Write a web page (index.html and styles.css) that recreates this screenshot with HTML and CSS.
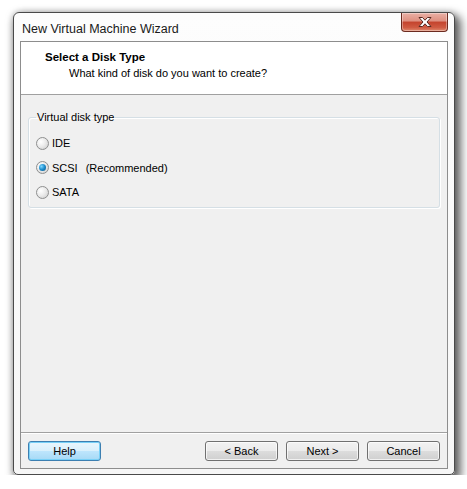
FILE: index.html
```html
<!DOCTYPE html>
<html>
<head>
<meta charset="utf-8">
<link rel="stylesheet" href="styles.css">
</head>
<body>
<div class="window">
  <div class="titlebar">
    <span class="title">New Virtual Machine Wizard</span>
    <div class="close">
      <svg width="18" height="12" viewBox="0 0 18 12">
        <path d="M3 1.5 L6.5 1.5 L9 4.2 L11.5 1.5 L15 1.5 L11 6 L15 10.5 L11.5 10.5 L9 7.8 L6.5 10.5 L3 10.5 L7 6 Z" fill="#fff" stroke="#5a2a22" stroke-width="1" stroke-linejoin="round"/>
      </svg>
    </div>
  </div>
  <div class="client">
    <div class="header">
      <div class="h-title">Select a Disk Type</div>
      <div class="h-sub">What kind of disk do you want to create?</div>
    </div>
    <div class="body">
      <fieldset class="group">
        <legend>Virtual disk type</legend>
        <div class="radio-row"><span class="radio"></span><span>IDE</span></div>
        <div class="radio-row"><span class="radio checked"></span><span>SCSI</span><span class="rec">(Recommended)</span></div>
        <div class="radio-row"><span class="radio"></span><span>SATA</span></div>
      </fieldset>
    </div>
    <div class="footer">
      <button class="btn default">Help</button>
      <div class="spacer"></div>
      <button class="btn">&lt; Back</button>
      <button class="btn">Next &gt;</button>
      <button class="btn">Cancel</button>
    </div>
  </div>
</div>
</body>
</html>
```

FILE: styles.css
```css
html, body {
  margin: 0;
  padding: 0;
  background: #ffffff;
}
body {
  padding: 12px 0 0 13px;
  font-family: "Liberation Sans", Arial, sans-serif;
  font-size: 11px;
  color: #000;
}
.window {
  width: 442px;
  height: 463px;
  box-sizing: border-box;
  border: 1px solid #4a4a4a;
  border-radius: 6px 6px 5px 5px;
  background: linear-gradient(#fdfdfd, #f6f6f6);
  box-shadow: 4px 5px 10px 2px rgba(0,0,0,0.6), 0 0 6px rgba(0,0,0,0.2);
  padding: 0 6px 5px 6px;
  display: flex;
  flex-direction: column;
}
.titlebar {
  height: 28px;
  display: flex;
  align-items: flex-start;
  justify-content: space-between;
  flex-shrink: 0;
}
.title {
  font-size: 12.5px;
  margin: 9px 0 0 2px;
  color: #1a1a1a;
}
.close {
  width: 45px;
  height: 18px;
  border: 1px solid #6b2a1f;
  border-top: none;
  border-radius: 0 0 4px 4px;
  background: linear-gradient(#eab0a5 0%, #de8f80 45%, #c4432d 50%, #cf5a42 80%, #e08a6e 100%);
  box-shadow: inset 0 0 0 1px rgba(255,255,255,0.35);
  display: flex;
  align-items: center;
  justify-content: center;
}
.client {
  flex: 1;
  border: 1px solid #8d8d8d;
  background: #f0f0f0;
  display: flex;
  flex-direction: column;
}
.header {
  background: #ffffff;
  height: 53px;
  border-bottom: 1px solid #a0a0a0;
  padding: 8px 0 0 24px;
  box-sizing: border-box;
}
.h-title {
  font-weight: bold;
  font-size: 11.5px;
  line-height: 14px;
}
.h-sub {
  padding-left: 24px;
  margin-top: 2px;
  line-height: 14px;
}
.body {
  flex: 1;
  padding: 16px 7px 0 7px;
}
.group {
  margin: 0;
  border: 1px solid #d5dfe5;
  border-radius: 3px;
  padding: 7px 7px 7px 7px;
  height: 97px;
  box-sizing: border-box;
  box-shadow: inset 1px 1px 0 #fff, 1px 1px 0 #fff;
}
.group legend {
  padding: 0 1px;
  margin-left: 0;
  line-height: 13px;
}
.radio-row {
  display: flex;
  align-items: center;
  height: 24.5px;
}
.radio-row .rec {
  margin-left: 8px;
}
.radio {
  width: 11px;
  height: 11px;
  border-radius: 50%;
  border: 1px solid #8e8f8f;
  background: radial-gradient(circle at 35% 35%, #ffffff 0%, #ececec 45%, #c9c9c9 100%);
  margin-right: 3px;
  position: relative;
  flex-shrink: 0;
}
.radio.checked::after {
  content: "";
  position: absolute;
  left: 2px;
  top: 2px;
  width: 7px;
  height: 7px;
  border-radius: 50%;
  background: radial-gradient(circle at 35% 35%, #7fd7ff 0%, #1b8bcb 50%, #0d4f7c 100%);
}
.footer {
  height: 36px;
  border-top: 1px solid #a0a0a0;
  box-shadow: inset 0 1px 0 #fff;
  display: flex;
  align-items: flex-start;
  padding: 8px 7px 0 7px;
  box-sizing: border-box;
  flex-shrink: 0;
}
.spacer { flex: 1; }
.btn {
  width: 73px;
  height: 20px;
  box-sizing: border-box;
  border: 1px solid #707070;
  border-radius: 3px;
  background: linear-gradient(#f2f2f2 0%, #ebebeb 49%, #dddddd 50%, #cfcfcf 100%);
  box-shadow: inset 0 0 0 1px rgba(255,255,255,0.7);
  font-family: "Liberation Sans", Arial, sans-serif;
  font-size: 11px;
  color: #000;
  padding: 0;
  margin-left: 8px;
}
.btn:first-child { margin-left: 0; }
.btn.default {
  border-color: #3c7fb1;
  background: linear-gradient(#eaf6fd 0%, #d9f0fc 49%, #bee6fd 50%, #a7d9f5 100%);
  box-shadow: inset 0 0 0 1px #78d0f7;
}
```
